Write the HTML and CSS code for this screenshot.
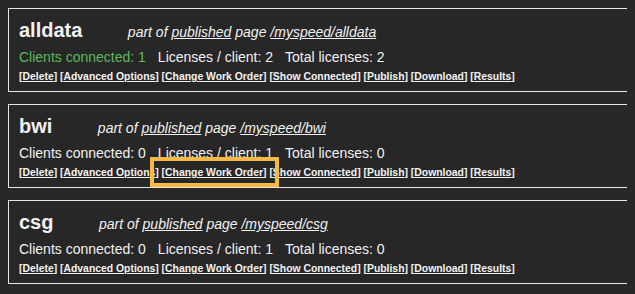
FILE: index.html
```html
<!DOCTYPE html>
<html>
<head>
<meta charset="utf-8">
<link rel="stylesheet" href="styles.css">
</head>
<body>
<div class="list">
  <div class="lic">
    <div class="head"><span class="name">alldata</span><span class="part">part of <a href="#">published</a> page <a href="#">/myspeed/alldata</a></span></div>
    <div class="stats"><span class="ok">Clients connected: 1</span><span>Licenses / client: 2</span><span>Total licenses: 2</span></div>
    <div class="links">[<a href="#">Delete</a>] [<a href="#">Advanced Options</a>] [<a href="#">Change Work Order</a>] [<a href="#">Show Connected</a>] [<a href="#">Publish</a>] [<a href="#">Download</a>] [<a href="#">Results</a>]</div>
  </div>
  <div class="lic">
    <div class="head"><span class="name">bwi</span><span class="part">part of <a href="#">published</a> page <a href="#">/myspeed/bwi</a></span></div>
    <div class="stats"><span>Clients connected: 0</span><span>Licenses / client: 1</span><span>Total licenses: 0</span></div>
    <div class="links">[<a href="#">Delete</a>] [<a href="#">Advanced Options</a>] [<a href="#">Change Work Order</a>] [<a href="#">Show Connected</a>] [<a href="#">Publish</a>] [<a href="#">Download</a>] [<a href="#">Results</a>]</div>
  </div>
  <div class="lic">
    <div class="head"><span class="name">csg</span><span class="part">part of <a href="#">published</a> page <a href="#">/myspeed/csg</a></span></div>
    <div class="stats"><span>Clients connected: 0</span><span>Licenses / client: 1</span><span>Total licenses: 0</span></div>
    <div class="links">[<a href="#">Delete</a>] [<a href="#">Advanced Options</a>] [<a href="#">Change Work Order</a>] [<a href="#">Show Connected</a>] [<a href="#">Publish</a>] [<a href="#">Download</a>] [<a href="#">Results</a>]</div>
  </div>
</div>
<div class="highlight"></div>
</body>
</html>
```
FILE: styles.css
```css
html, body {
  background: #272727;
}
body {
  margin: 8px;
  color: #f2f2f2;
  font-family: "Liberation Sans", Arial, sans-serif;
  position: relative;
}
a {
  color: #f2f2f2;
  text-decoration: underline;
}
.list {
  width: 622px;
}
.lic {
  border: 1px solid #e6e6e6;
  padding: 10px 10px 8px 10px;
  margin-bottom: 12px;
  box-sizing: border-box;
}
.head {
  line-height: 23px;
  height: 23px;
  margin-bottom: 7px;
  white-space: nowrap;
}
.name {
  font-size: 20px;
  font-weight: bold;
}
.part {
  font-size: 14px;
  font-style: italic;
  margin-left: 45.5px;
}
.stats {
  display: flex;
  gap: 12px;
  font-size: 14px;
  line-height: 16px;
  margin-bottom: 6px;
}
.ok {
  color: #5cb85c;
}
.links {
  font-size: 10.4px;
  font-weight: bold;
  line-height: 12px;
  white-space: nowrap;
}
.highlight {
  position: absolute;
  left: 142px;
  top: 149px;
  width: 129px;
  height: 30px;
  box-sizing: border-box;
  border: 4px solid #f5b944;
}
```
